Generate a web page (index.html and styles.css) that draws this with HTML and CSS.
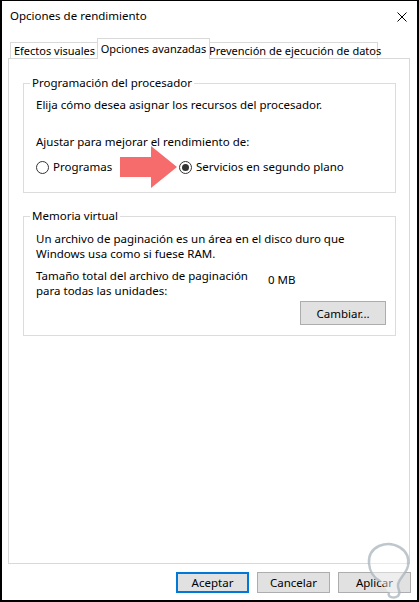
FILE: index.html
```html
<!DOCTYPE html>
<html lang="es">
<head>
<meta charset="utf-8">
<title>Opciones de rendimiento</title>
<link rel="stylesheet" href="styles.css">
</head>
<body>
<div class="window">
  <div class="titlebar">
    <span class="title">Opciones de rendimiento</span>
    <svg class="close" width="10" height="10" viewBox="0 0 10 10"><path d="M0.5 0.5 L9.5 9.5 M9.5 0.5 L0.5 9.5" stroke="#000" stroke-width="1"/></svg>
  </div>
  <div class="tabs">
    <div class="tab tab-efectos">Efectos visuales</div>
    <div class="tab tab-active">Opciones avanzadas</div>
    <div class="tab tab-prev">Prevención de ejecución de datos</div>
  </div>
  <div class="page">
    <div class="group group-cpu">
      <div class="legend">Programación del procesador</div>
      <p class="line desc">Elija cómo desea asignar los recursos del procesador.</p>
      <p class="line adjust">Ajustar para mejorar el rendimiento de:</p>
      <div class="radios">
        <div class="radio radio-first"><span class="circle"></span><span>Programas</span></div>
        <div class="radio"><span class="circle checked"></span><span>Servicios en segundo plano</span></div>
      </div>
    </div>
    <div class="group group-mem">
      <div class="legend">Memoria virtual</div>
      <p class="para">Un archivo de paginación es un área en el disco duro que<br>Windows usa como si fuese RAM.</p>
      <div class="size-row">
        <p class="para size-label">Tamaño total del archivo de paginación<br>para todas las unidades:</p>
        <span class="size-value">0 MB</span>
      </div>
      <div class="change-row">
        <button class="btn btn-change">Cambiar...</button>
      </div>
    </div>
  </div>
  <div class="buttons">
    <button class="btn btn-default">Aceptar</button>
    <button class="btn">Cancelar</button>
    <button class="btn">Aplicar</button>
  </div>
  <svg class="overlay" width="419" height="602" viewBox="0 0 419 602">
    <polygon points="120,157 151,157 151,146 177,167 151,188 151,177 120,177" fill="#f66b6b"/>
    <path d="M380 581 C367 574 364 553 379 546 C393 540 411 549 408 566 C406 574 400 577 398 584 C397 590 402 592 398 596 C394 599 387 597 389 593" fill="rgba(255,255,255,0.45)" stroke="rgba(170,180,190,0.75)" stroke-width="2.5" stroke-linecap="round"/>
  </svg>
</div>
</body>
</html>
```

FILE: styles.css
```css
* { box-sizing: border-box; }
html, body { margin: 0; padding: 0; background: #fff; }
body {
  font-family: "Noto Sans", "Open Sans", sans-serif;
  font-size: 11.5px;
  color: #000;
}
.window {
  position: relative;
  width: 419px;
  height: 602px;
  border-style: solid;
  border-color: #000;
  border-width: 1px 2px 2px 2px;
  background: #fff;
  display: flex;
  flex-direction: column;
}
.titlebar {
  height: 30px;
  padding: 7px 0 0 8px;
  line-height: 16px;
  display: flex;
  align-items: flex-start;
  justify-content: space-between;
}
.title { font-size: 11.5px; }
.close { margin: 4px 10px 0 0; }
.tabs {
  margin-top: 7px;
  height: 20px;
  padding-left: 8px;
  display: flex;
  align-items: flex-end;
  position: relative;
  z-index: 1;
  font-size: 11px;
}
.tab {
  height: 16px;
  border: 1px solid #d9d9d9;
  border-bottom: none;
  background: #fff;
  line-height: 15px;
  text-align: center;
  white-space: nowrap;
}
.tab-efectos { width: 89px; }
.tab-active {
  width: 113px;
  height: 21px;
  margin: 0 -2px -1px -2px;
  line-height: 15px;
  padding-top: 2px;
  position: relative;
  z-index: 2;
}
.tab-prev { width: 170px; }
.page {
  margin-left: 6px;
  width: 402px;
  height: 506px;
  border: 1px solid #d9d9d9;
  padding-top: 24px;
  padding-left: 14px;
}
.group {
  width: 373px;
  border: 1px solid #dcdcdc;
  padding: 0 9px 0 12px;
}
.legend {
  width: fit-content;
  margin: -9px 0 0 -6px;
  padding: 0 2px;
  background: #fff;
  line-height: 16px;
}
.line { margin: 0; line-height: 16px; }
.desc { margin-top: 6px; }
.adjust { margin-top: 21px; }
.radios {
  margin-top: 9px;
  display: flex;
  line-height: 16px;
}
.group-cpu { padding-bottom: 17px; }
.radio { display: flex; align-items: center; gap: 4px; }
.radio-first { width: 143px; }
.circle {
  width: 13px;
  height: 13px;
  border: 1px solid #333;
  border-radius: 50%;
  display: flex;
  align-items: center;
  justify-content: center;
}
.circle.checked::after {
  content: "";
  width: 7px;
  height: 7px;
  border-radius: 50%;
  background: #333;
}
.group-mem {
  margin-top: 23px;
  padding-bottom: 10px;
}
.para { margin: 7px 0 0 0; line-height: 15px; white-space: nowrap; }
.size-row { display: flex; margin-top: 7px; }
.size-row .size-label { margin: 0; flex: 0 0 232px; }
.size-value { margin-top: 4px; line-height: 15px; }
.change-row { display: flex; justify-content: flex-end; margin-top: 3px; }
.btn {
  font-family: inherit;
  font-size: 11.5px;
  color: #000;
  background: #e1e1e1;
  border: 1px solid #adadad;
  padding: 0;
  margin: 0;
  width: 73px;
  height: 21px;
  line-height: 17px;
}
.btn-change { width: 86px; height: 24px; }
.btn-default { border: 2px solid #0078d7; }
.buttons {
  display: flex;
  justify-content: flex-end;
  gap: 8px;
  margin-top: 8px;
  padding-right: 6px;
}
.overlay {
  position: absolute;
  left: -2px;
  top: -1px;
  pointer-events: none;
  z-index: 5;
}
```
